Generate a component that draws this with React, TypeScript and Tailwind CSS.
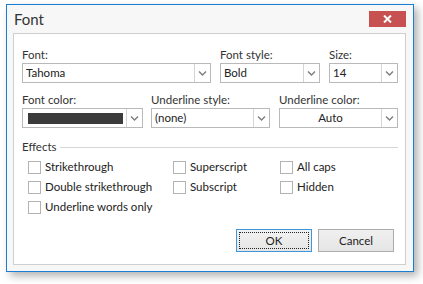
import React from 'react';

const Chevron = () => (
    <svg width="9" height="6" viewBox="0 0 9 6" className="block">
        <path d="M1 1.5 L4.5 5 L8 1.5" fill="none" stroke="#7d7d7d" strokeWidth="1.4" />
    </svg>
);

const Combo = ({ width, children, center }: { width: string; children: React.ReactNode; center?: boolean }) => (
    <div className={`${width} h-[20px] flex border border-[#b9b9b9] bg-white`}>
        <div className={`flex-1 flex items-center px-[3px] text-[11.5px] text-[#222] ${center ? 'justify-center' : ''}`}>
            {children}
        </div>
        <div className="w-[16px] border-l border-[#d4d4d4] flex items-center justify-center">
            <Chevron />
        </div>
    </div>
);

const Check = ({ label }: { label: string }) => (
    <div className="h-[20px] flex items-center gap-[4px]">
        <div className="w-[13px] h-[13px] border border-[#b3b3b3] bg-white" />
        <span className="text-[11.5px] text-[#222]">{label}</span>
    </div>
);

export default function App() {
    return (
        <div className="w-[423px] h-[284px] bg-white pt-[4px] pl-[6px]" style={{ fontFamily: 'Lato, "Noto Sans", sans-serif' }}>
            <div className="w-[408px] h-[268px] border border-[#1a7fd4] bg-[#f7f7f7] flex flex-col shadow-[4px_4px_8px_rgba(0,0,0,0.3)]">

                {/* Title bar */}
                <div className="h-[28px] flex items-start justify-between pl-[7px] pr-[7px]">
                    <span className="text-[15px] text-[#333] leading-[20px] mt-[4px]">Font</span>
                    <div className="w-[37px] h-[16px] mt-[6px] bg-[#c75050] flex items-center justify-center">
                        <svg width="9" height="8" viewBox="0 0 9 8">
                            <path d="M1 0.5 L8 7.5 M8 0.5 L1 7.5" stroke="white" strokeWidth="2" />
                        </svg>
                    </div>
                </div>

                {/* Content panel */}
                <div className="flex-1 mx-[6px] mr-[7px] mb-[6px] border border-[#cfcfcf] bg-white pl-[8px] pr-[7px] pt-[13px] text-[#333]">
                    <div className="flex gap-[9px]">
                        <div className="flex flex-col">
                            <span className="text-[11.5px] leading-[16px]">Font:</span>
                            <Combo width="w-[189px]">Tahoma</Combo>
                        </div>
                        <div className="flex flex-col">
                            <span className="text-[11.5px] leading-[16px]">Font style:</span>
                            <Combo width="w-[100px]">Bold</Combo>
                        </div>
                        <div className="flex flex-col">
                            <span className="text-[11.5px] leading-[16px]">Size:</span>
                            <Combo width="w-[69px]">14</Combo>
                        </div>
                    </div>

                    <div className="flex mt-[9px]">
                        <div className="flex flex-col">
                            <span className="text-[11.5px] leading-[16px]">Font color:</span>
                            <Combo width="w-[121px]">
                                <div className="w-[95px] h-[11px] bg-[#3b3b3b] ml-[2px]" />
                            </Combo>
                        </div>
                        <div className="flex flex-col ml-[8px]">
                            <span className="text-[11.5px] leading-[16px]">Underline style:</span>
                            <Combo width="w-[119px]">(none)</Combo>
                        </div>
                        <div className="flex flex-col ml-[9px]">
                            <span className="text-[11.5px] leading-[16px]">Underline color:</span>
                            <Combo width="w-[119px]" center>Auto</Combo>
                        </div>
                    </div>

                    {/* Effects */}
                    <div className="flex items-center gap-[3px] mt-[11px] h-[16px]">
                        <span className="text-[11.5px] leading-[16px]">Effects</span>
                        <div className="flex-1 h-px bg-[#d6d6d6]" />
                    </div>

                    <div className="flex mt-[2px] pl-[6px]">
                        <div className="w-[145px] flex flex-col">
                            <Check label="Strikethrough" />
                            <Check label="Double strikethrough" />
                            <Check label="Underline words only" />
                        </div>
                        <div className="w-[107px] flex flex-col">
                            <Check label="Superscript" />
                            <Check label="Subscript" />
                        </div>
                        <div className="flex flex-col">
                            <Check label="All caps" />
                            <Check label="Hidden" />
                        </div>
                    </div>

                    {/* Buttons */}
                    <div className="flex justify-end gap-[6px] mt-[12px] pr-[4px]">
                        <button className="w-[76px] h-[23px] border border-[#3d95dc] bg-gradient-to-b from-[#f2f2f2] to-[#e6e6e6] p-[2px]">
                            <div className="w-full h-full border border-dotted border-[#222] flex items-center justify-center text-[11.5px] text-[#222]">OK</div>
                        </button>
                        <button className="w-[76px] h-[23px] border border-[#adadad] bg-gradient-to-b from-[#f0f0f0] to-[#e5e5e5] flex items-center justify-center text-[11.5px] text-[#222]">
                            Cancel
                        </button>
                    </div>
                </div>
            </div>
        </div>
    );
}
